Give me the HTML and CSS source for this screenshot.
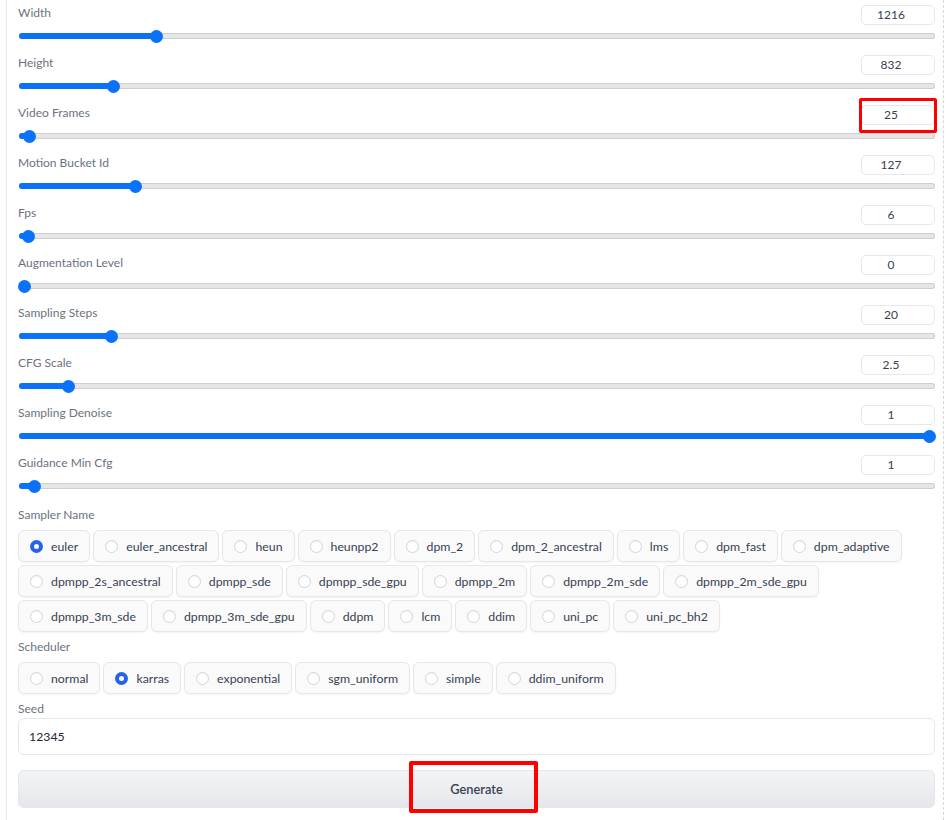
FILE: index.html
```html
<!DOCTYPE html>
<html>
<head>
<meta charset="utf-8">
<link rel="stylesheet" href="styles.css">
</head>
<body>
<div class="panel">
  <div class="slider-row">
    <div class="slider-head"><span class="label">Width</span><span class="num">1216</span></div>
    <div class="track"><div class="fill" style="width:15.1%"></div></div>
  </div>
  <div class="slider-row">
    <div class="slider-head"><span class="label">Height</span><span class="num">832</span></div>
    <div class="track"><div class="fill" style="width:10.4%"></div></div>
  </div>
  <div class="slider-row">
    <div class="slider-head"><span class="label">Video Frames</span><span class="num hl">25</span></div>
    <div class="track"><div class="fill" style="width:1.2%"></div></div>
  </div>
  <div class="slider-row">
    <div class="slider-head"><span class="label">Motion Bucket Id</span><span class="num">127</span></div>
    <div class="track"><div class="fill" style="width:12.8%"></div></div>
  </div>
  <div class="slider-row">
    <div class="slider-head"><span class="label">Fps</span><span class="num">6</span></div>
    <div class="track"><div class="fill" style="width:1.1%"></div></div>
  </div>
  <div class="slider-row">
    <div class="slider-head"><span class="label">Augmentation Level</span><span class="num">0</span></div>
    <div class="track"><div class="fill" style="width:0.7%"></div></div>
  </div>
  <div class="slider-row">
    <div class="slider-head"><span class="label">Sampling Steps</span><span class="num">20</span></div>
    <div class="track"><div class="fill" style="width:10.1%"></div></div>
  </div>
  <div class="slider-row">
    <div class="slider-head"><span class="label">CFG Scale</span><span class="num">2.5</span></div>
    <div class="track"><div class="fill" style="width:5.5%"></div></div>
  </div>
  <div class="slider-row">
    <div class="slider-head"><span class="label">Sampling Denoise</span><span class="num">1</span></div>
    <div class="track"><div class="fill" style="width:99.4%"></div></div>
  </div>
  <div class="slider-row">
    <div class="slider-head"><span class="label">Guidance Min Cfg</span><span class="num">1</span></div>
    <div class="track"><div class="fill" style="width:1.7%"></div></div>
  </div>

  <div class="section first">
    <div class="label sec-label">Sampler Name</div>
    <div class="chips">
      <label class="chip"><span class="radio on"></span>euler</label>
      <label class="chip"><span class="radio"></span>euler_ancestral</label>
      <label class="chip"><span class="radio"></span>heun</label>
      <label class="chip"><span class="radio"></span>heunpp2</label>
      <label class="chip"><span class="radio"></span>dpm_2</label>
      <label class="chip"><span class="radio"></span>dpm_2_ancestral</label>
      <label class="chip"><span class="radio"></span>lms</label>
      <label class="chip"><span class="radio"></span>dpm_fast</label>
      <label class="chip"><span class="radio"></span>dpm_adaptive</label>
      <label class="chip"><span class="radio"></span>dpmpp_2s_ancestral</label>
      <label class="chip"><span class="radio"></span>dpmpp_sde</label>
      <label class="chip"><span class="radio"></span>dpmpp_sde_gpu</label>
      <label class="chip"><span class="radio"></span>dpmpp_2m</label>
      <label class="chip"><span class="radio"></span>dpmpp_2m_sde</label>
      <label class="chip"><span class="radio"></span>dpmpp_2m_sde_gpu</label>
      <label class="chip"><span class="radio"></span>dpmpp_3m_sde</label>
      <label class="chip"><span class="radio"></span>dpmpp_3m_sde_gpu</label>
      <label class="chip"><span class="radio"></span>ddpm</label>
      <label class="chip"><span class="radio"></span>lcm</label>
      <label class="chip"><span class="radio"></span>ddim</label>
      <label class="chip"><span class="radio"></span>uni_pc</label>
      <label class="chip"><span class="radio"></span>uni_pc_bh2</label>
    </div>
  </div>

  <div class="section">
    <div class="label sec-label">Scheduler</div>
    <div class="chips">
      <label class="chip"><span class="radio"></span>normal</label>
      <label class="chip"><span class="radio on"></span>karras</label>
      <label class="chip"><span class="radio"></span>exponential</label>
      <label class="chip"><span class="radio"></span>sgm_uniform</label>
      <label class="chip"><span class="radio"></span>simple</label>
      <label class="chip"><span class="radio"></span>ddim_uniform</label>
    </div>
  </div>

  <div class="section seed">
    <div class="label sec-label seed-label">Seed</div>
    <div class="textbox">12345</div>
  </div>

  <div class="btn-wrap">
    <div class="btn"><span class="btn-text">Generate</span><span class="mark"></span></div>
  </div>
</div>
</body>
</html>
```

FILE: styles.css
```css
* { box-sizing: border-box; }
html, body { margin: 0; padding: 0; background: #ffffff; }
body {
  font-family: "Source Sans Pro", Lato, "Open Sans", "Liberation Sans", sans-serif;
  font-size: 12.3px;
  color: #374151;
}
.panel {
  margin-left: 6px;
  width: 938px;
  min-height: 820px;
  border-left: 1px solid #e5e7eb;
  border-right: 1px dashed #d8d8d8;
  padding: 0 8px 0 11px;
}
.slider-row {
  height: 50px;
  padding-top: 5px;
}
.slider-head {
  display: flex;
  justify-content: space-between;
  align-items: flex-start;
  height: 20px;
}
.label {
  color: #6b7280;
  font-size: 12px;
  line-height: 16px;
}
.num {
  width: 74px;
  height: 20px;
  border: 1px solid #e5e7eb;
  border-radius: 5px;
  text-align: center;
  padding-right: 14px;
  line-height: 18px;
  font-size: 12px;
  color: #374151;
  background: #fff;
  position: relative;
}
.num.hl::after {
  content: "";
  position: absolute;
  left: -3px; top: -8px; right: -3px; bottom: -9px;
  border: 3px solid #ff0000;
  border-radius: 2px;
}
.track {
  position: relative;
  margin-top: 8px;
  margin-left: 1px;
  height: 6px;
  background: #e6e6e6;
  border-radius: 3px;
  box-shadow: inset 0 0 0 1px #cfcfcf;
}
.fill {
  position: relative;
  height: 6px;
  background: #0a72f8;
  border-radius: 3px;
  min-width: 6px;
}
.fill::after {
  content: "";
  position: absolute;
  right: -6px;
  top: -3.5px;
  width: 13px;
  height: 13px;
  border-radius: 50%;
  background: #0a72f8;
}
.section.first { margin-top: 7px; }
.sec-label {
  height: 16px;
  margin-bottom: 7px;
}
.chips {
  display: flex;
  flex-wrap: wrap;
  gap: 3px;
  margin-bottom: 7px;
}
.chip {
  display: flex;
  align-items: center;
  height: 32px;
  padding: 0 11px 0 11px;
  border: 1px solid #e5e7eb;
  border-radius: 6px;
  background: #fafafa;
  box-shadow: 0 1px 2px rgba(0,0,0,0.05);
  color: #374151;
}
.radio {
  width: 13px;
  height: 13px;
  border-radius: 50%;
  border: 1px solid #d1d5db;
  background: #fff;
  margin-right: 8px;
  flex: none;
  box-shadow: inset 0 1px 1px rgba(0,0,0,0.04);
}
.radio.on {
  border: 4px solid #2563eb;
  background: #fff;
}
.seed-label { margin-bottom: 1px; }
.textbox {
  height: 37px;
  border: 1px solid #e5e7eb;
  border-radius: 6px;
  padding: 0 10px;
  line-height: 35px;
  font-size: 12.3px;
  color: #1f2937;
  background: #fff;
}
.btn-wrap { margin-top: 15px; }
.btn {
  position: relative;
  height: 38px;
  border: 1px solid #e5e7eb;
  border-radius: 6px;
  background: linear-gradient(to bottom, #f3f4f6, #e5e7eb);
  display: flex;
  align-items: center;
  justify-content: center;
}
.btn-text {
  font-weight: 600;
  font-size: 12.8px;
  color: #374151;
}
.mark {
  position: absolute;
  left: calc(50% - 68px);
  width: 129px;
  top: -10px;
  height: 52px;
  border: 4px solid #ff0000;
  border-radius: 2px;
}
```
